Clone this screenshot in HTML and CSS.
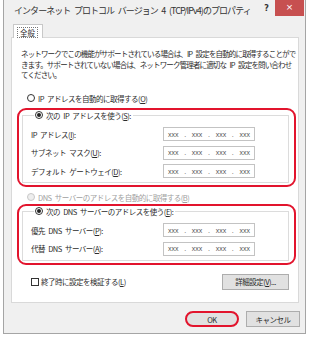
FILE: index.html
```html
<!DOCTYPE html>
<html lang="ja">
<head>
  <meta charset="UTF-8">
  <title>インターネット プロトコル バージョン 4 (TCP/IPv4)のプロパティ</title>
  <link rel="stylesheet" href="styles.css">
</head>
<body>
<div class="window">
  <div class="titlebar">
    <span class="title">インターネット プロトコル バージョン 4 (TCP/IPv4)のプロパティ</span>
    <span class="help">?</span>
    <span class="close">×</span>
  </div>

  <div class="tabs">
    <span class="tab"><span class="tab-label">全般</span></span>
  </div>

  <div class="panel">
    <p class="desc">ネットワークでこの機能がサポートされている場合は、IP 設定を自動的に取得することがで<br>きます。サポートされていない場合は、ネットワーク管理者に適切な IP 設定を問い合わせ<br>てください。</p>

    <div class="opt first"><span class="radio"></span>IP アドレスを自動的に取得する(<u>O</u>)</div>

    <div class="mark mark-ip">
      <fieldset class="group">
        <legend><span class="radio on"></span>次の IP アドレスを使う(<u>S</u>):</legend>
        <div class="row"><span class="lbl">IP アドレス(<u>I</u>):</span><span class="ip"><i>xxx</i>.<i>xxx</i>.<i>xxx</i>.<i>xxx</i></span></div>
        <div class="row"><span class="lbl">サブネット マスク(<u>U</u>):</span><span class="ip"><i>xxx</i>.<i>xxx</i>.<i>xxx</i>.<i>xxx</i></span></div>
        <div class="row"><span class="lbl">デフォルト ゲートウェイ(<u>D</u>):</span><span class="ip"><i>xxx</i>.<i>xxx</i>.<i>xxx</i>.<i>xxx</i></span></div>
      </fieldset>
    </div>

    <div class="opt disabled"><span class="radio"></span>DNS サーバーのアドレスを自動的に取得する(<u>B</u>)</div>

    <div class="mark mark-dns">
      <fieldset class="group">
        <legend><span class="radio on"></span>次の DNS サーバーのアドレスを使う(<u>E</u>):</legend>
        <div class="row"><span class="lbl">優先 DNS サーバー(<u>P</u>):</span><span class="ip"><i>xxx</i>.<i>xxx</i>.<i>xxx</i>.<i>xxx</i></span></div>
        <div class="row"><span class="lbl">代替 DNS サーバー(<u>A</u>):</span><span class="ip"><i>xxx</i>.<i>xxx</i>.<i>xxx</i>.<i>xxx</i></span></div>
      </fieldset>
    </div>

    <div class="footer-row">
      <span class="check"><span class="box"></span>終了時に設定を検証する(<u>L</u>)</span>
      <span class="btn adv">詳細設定(<u>V</u>)...</span>
    </div>
  </div>

  <div class="actions">
    <span class="btn ok">OK</span>
    <span class="btn">キャンセル</span>
  </div>
</div>
</body>
</html>
```

FILE: styles.css
```css
* {
  margin: 0;
  padding: 0;
  box-sizing: border-box;
}

body {
  background: #fff;
  font-family: "Noto Sans CJK JP", "Noto Sans", sans-serif;
  font-size: 7.5px;
  color: #2b2b2b;
}

u {
  text-decoration: underline;
}

.window {
  width: 303px;
  height: 334px;
  margin-left: 3px;
  background: #f0f0f0;
  border: 1px solid #a5a5a5;
  border-top: 0;
}

/* タイトルバー */
.titlebar {
  height: 22px;
  display: flex;
  align-items: flex-start;
  padding-left: 10px;
}

.title {
  font-size: 9px;
  letter-spacing: -0.95px;
  word-spacing: 2.5px;
  line-height: 22px;
  color: #333;
  flex: 1;
}

.help {
  font-family: "DejaVu Sans", sans-serif;
  font-size: 8px;
  font-weight: bold;
  line-height: 18px;
  margin-right: 6px;
  color: #333;
}

.close {
  width: 29px;
  height: 16px;
  margin-right: 1px;
  background: #c75050;
  color: #fff;
  font-family: "DejaVu Sans", sans-serif;
  font-size: 9px;
  text-align: center;
  line-height: 15px;
}

/* タブ */
.tabs {
  display: flex;
  margin-top: 2px;
  padding-left: 9px;
  margin-bottom: -1px;
}

.tab {
  position: relative;
  width: 30px;
  height: 14px;
  background: #fff;
  border: 1px solid #c8c8c8;
  border-bottom: 0;
  padding: 2px 0 0 3px;
}

.tab-label {
  display: inline-block;
  border: 1px dotted #777;
  padding: 0 2px;
  line-height: 9px;
  height: 11px;
}

.panel {
  width: 288px;
  height: 266px;
  margin-left: 7px;
  background: #fff;
  border: 1px solid #d9d9d9;
  padding: 11px 0 0 5px;
}

.desc {
  margin-left: 4px;
  line-height: 10.5px;
  letter-spacing: -0.85px;
  word-spacing: 2.5px;
  white-space: nowrap;
}

.opt {
  display: flex;
  align-items: center;
  height: 10px;
  letter-spacing: -0.5px;
  word-spacing: 2px;
  margin-left: 10px;
}

.opt.first {
  margin-top: 12.5px;
}

.opt.disabled {
  color: #a0a0a0;
  margin-top: 5px;
}

.radio {
  width: 8px;
  height: 8px;
  border: 1px solid #333;
  border-radius: 50%;
  background: #fff;
  margin-right: 3px;
  display: inline-flex;
  align-items: center;
  justify-content: center;
}

.radio.on::after {
  content: "";
  width: 4px;
  height: 4px;
  border-radius: 50%;
  background: #222;
}

.disabled .radio {
  border-color: #c8c8c8;
  background: #eee;
}

/* 赤い囲み */
.mark {
  width: 279px;
  border: 2px solid #e2142d;
  border-radius: 9px;
  padding: 0 5px 2px 3px;
}

.mark-ip {
  margin-top: 5px;
}

.mark-dns {
  margin-top: 2px;
}

.group {
  border: 1px solid #dcdcdc;
  padding: 0 33px 4px 8px;
}

.group legend {
  display: flex;
  align-items: center;
  height: 10px;
  margin-left: 3px;
  padding: 0 2px 0 1px;
  letter-spacing: -0.5px;
  word-spacing: 2px;
}

.row {
  display: flex;
  align-items: center;
  justify-content: space-between;
  height: 14px;
  margin-top: 4.5px;
  letter-spacing: -0.5px;
  word-spacing: 2px;
}

.row:first-of-type {
  margin-top: 7px;
}

.ip {
  width: 92px;
  height: 14px;
  border: 1px solid #c3c3c3;
  display: flex;
  align-items: center;
  justify-content: space-between;
  padding: 0 4px 0 4px;
  font-family: "Liberation Sans", sans-serif;
  font-size: 7px;
  color: #555;
  letter-spacing: 0;
  word-spacing: 0;
}

.ip i {
  font-style: normal;
}

.footer-row {
  display: flex;
  align-items: center;
  justify-content: space-between;
  width: 272px;
  margin-top: 9px;
  padding-left: 14px;
}

.check {
  display: flex;
  align-items: center;
  letter-spacing: -0.5px;
}

.check .box {
  width: 8px;
  height: 8px;
  border: 1px solid #333;
  background: #fff;
  margin-right: 2px;
}

.btn {
  display: flex;
  align-items: center;
  justify-content: center;
  height: 16px;
  background: #e1e1e1;
  border: 1px solid #adadad;
  letter-spacing: -0.5px;
}

.adv {
  width: 67px;
}

.actions {
  display: flex;
  justify-content: flex-end;
  gap: 7px;
  margin-top: 8px;
  padding-right: 5px;
}

.actions .btn {
  width: 54px;
}

.actions .ok {
  border: 2px solid #e2142d;
  border-radius: 8px;
}
```
